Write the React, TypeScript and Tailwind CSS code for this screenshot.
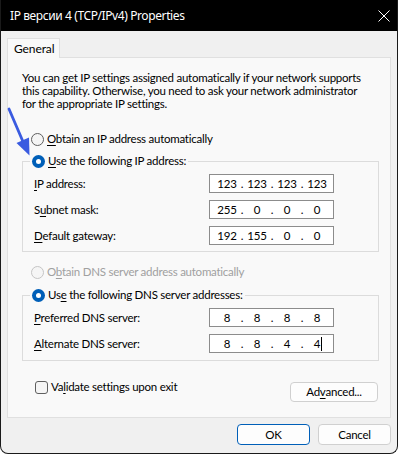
import React from "react";

const U = ({ c }: { c: string }) => <span className="underline underline-offset-[2px] decoration-[1px]">{c}</span>;

function Radio({ checked, disabled }: { checked?: boolean; disabled?: boolean }) {
  if (checked)
    return (
      <span className="w-[13px] h-[13px] rounded-full bg-[#005fb8] flex items-center justify-center shrink-0">
        <span className="w-[5px] h-[5px] rounded-full bg-white" />
      </span>
    );
  return (
    <span
      className={
        "w-[13px] h-[13px] rounded-full border shrink-0 " +
        (disabled ? "border-[#c5c5c5] bg-[#f5f5f5]" : "border-[#5f5f5f] bg-[#f5f5f5]")
      }
    />
  );
}

function IpBox({ parts, cursor }: { parts: string[]; cursor?: boolean }) {
  return (
    <div className="w-[125px] h-[19px] border border-[#8c8c8c] bg-white flex items-center pl-[5px] text-black">
      {parts.map((p, i) => (
        <React.Fragment key={i}>
          <span className="w-[24px] flex items-center justify-center">
            <span className={cursor && i === 3 ? "ml-[2px]" : ""}>{p}</span>
            {cursor && i === 3 ? <span className="w-px h-[14px] bg-black ml-[1px]" /> : null}
          </span>
          {i < 3 ? <span className="w-[6px] text-center">.</span> : null}
        </React.Fragment>
      ))}
    </div>
  );
}

function Row({ label, parts, cursor }: { label: React.ReactNode; parts: string[]; cursor?: boolean }) {
  return (
    <div className="flex items-center h-[19px]">
      <span className="w-[175px]">{label}</span>
      <IpBox parts={parts} cursor={cursor} />
    </div>
  );
}

export default function App() {
  return (
    <div className="w-[400px] h-[455px] bg-white font-['Lato',sans-serif] text-[11.5px] tracking-[-0.25px] text-black leading-[16px] relative">
      <div className="w-[398px] h-[454px] flex flex-col bg-[#f0f0f0] border-l border-r border-b border-[#1a1a1a] rounded-b-[8px] overflow-hidden">
        <div className="h-[31px] bg-black flex items-center justify-between text-white pl-[9px] pr-[7px] shrink-0 font-['Noto_Sans',sans-serif] text-[12px] tracking-[-0.4px]">
          <span>IP версии 4 (TCP/IPv4) Properties</span>
          <svg width="12" height="12" viewBox="0 0 12 12">
            <path d="M0.5 0.5 L11.5 11.5 M11.5 0.5 L0.5 11.5" stroke="white" strokeWidth="1" />
          </svg>
        </div>
        <div className="pl-[6px] pt-[7px] shrink-0">
          <div className="flex">
            <div className="h-[20px] w-[53px] border border-b-0 border-[#e0e0e0] bg-[#f9f9f9] pl-[6px] pt-[2px] relative z-10 text-[12px] tracking-[-0.1px]">
              General
            </div>
          </div>
          <div className="-mt-px w-[384px] h-[361px] border border-[#e0e0e0] bg-[#f9f9f9] pt-[13px] pl-[14px]">
            <p className="leading-[13px] whitespace-nowrap">
              You can get IP settings assigned automatically if your network supports
              <br />
              this capability. Otherwise, you need to ask your network administrator
              <br />
              for the appropriate IP settings.
            </p>
            <div className="mt-[21px] ml-[9px] flex items-center gap-[3px] h-[16px]">
              <Radio />
              <span><U c="O" />btain an IP address automatically</span>
            </div>
            <fieldset className="mt-[6px] w-[357px] border border-[#dcdcdc] pt-[5px] pb-[6px]">
              <legend className="ml-[7px] px-[2px] bg-[#f9f9f9]">
                <span className="flex items-center gap-[3px] h-[16px]">
                  <Radio checked />
                  <span><U c="U" />se the following IP address:</span>
                </span>
              </legend>
              <div className="flex flex-col gap-[7px] pl-[11px]">
                <Row label={<><U c="I" />P address:</>} parts={["123", "123", "123", "123"]} />
                <Row label={<>S<U c="u" />bnet mask:</>} parts={["255", "0", "0", "0"]} />
                <Row label={<><U c="D" />efault gateway:</>} parts={["192", "155", "0", "0"]} />
              </div>
            </fieldset>
            <div className="mt-[12px] ml-[9px] flex items-center gap-[3px] h-[16px] text-[#a0a0a0]">
              <Radio disabled />
              <span>O<U c="b" />tain DNS server address automatically</span>
            </div>
            <fieldset className="mt-[7px] w-[357px] border border-[#dcdcdc] pt-[5px] pb-[7px]">
              <legend className="ml-[7px] px-[2px] bg-[#f9f9f9]">
                <span className="flex items-center gap-[3px] h-[16px]">
                  <Radio checked />
                  <span>Us<U c="e" /> the following DNS server addresses:</span>
                </span>
              </legend>
              <div className="flex flex-col gap-[7px] pl-[11px]">
                <Row label={<><U c="P" />referred DNS server:</>} parts={["8", "8", "8", "8"]} />
                <Row label={<><U c="A" />lternate DNS server:</>} parts={["8", "8", "4", "4"]} cursor />
              </div>
            </fieldset>
            <div className="mt-[19px] flex items-start justify-between w-[356px]">
              <div className="flex items-center gap-[3px] ml-[13px] mt-[-1px]">
                <span className="w-[13px] h-[13px] border border-[#5f5f5f] rounded-[3px] bg-[#f5f5f5]" />
                <span>Va<U c="l" />idate settings upon exit</span>
              </div>
              <button className="mt-[2px] w-[88px] h-[20px] border border-[#d0d0d0] rounded-[4px] bg-[#fdfdfd] flex items-center justify-center">
                Ad<U c="v" />anced...
              </button>
            </div>
          </div>
        </div>
        <div className="flex justify-end gap-[8px] pr-[6px] pt-[6px]">
          <button className="w-[73px] h-[21px] border border-[#005fb8] rounded-[4px] bg-[#fdfdfd] flex items-center justify-center">OK</button>
          <button className="w-[73px] h-[21px] border border-[#d0d0d0] rounded-[4px] bg-[#fdfdfd] flex items-center justify-center">Cancel</button>
        </div>
      </div>
      <svg className="absolute left-0 top-0 pointer-events-none" width="40" height="160" viewBox="0 0 40 160">
        <path d="M9 109 L24 144" stroke="#3a5be0" strokeWidth="2.8" strokeLinecap="round" />
        <path d="M29.5 155.5 L16.5 143 L29 137.5 Z" fill="#3a5be0" />
      </svg>
    </div>
  );
}
